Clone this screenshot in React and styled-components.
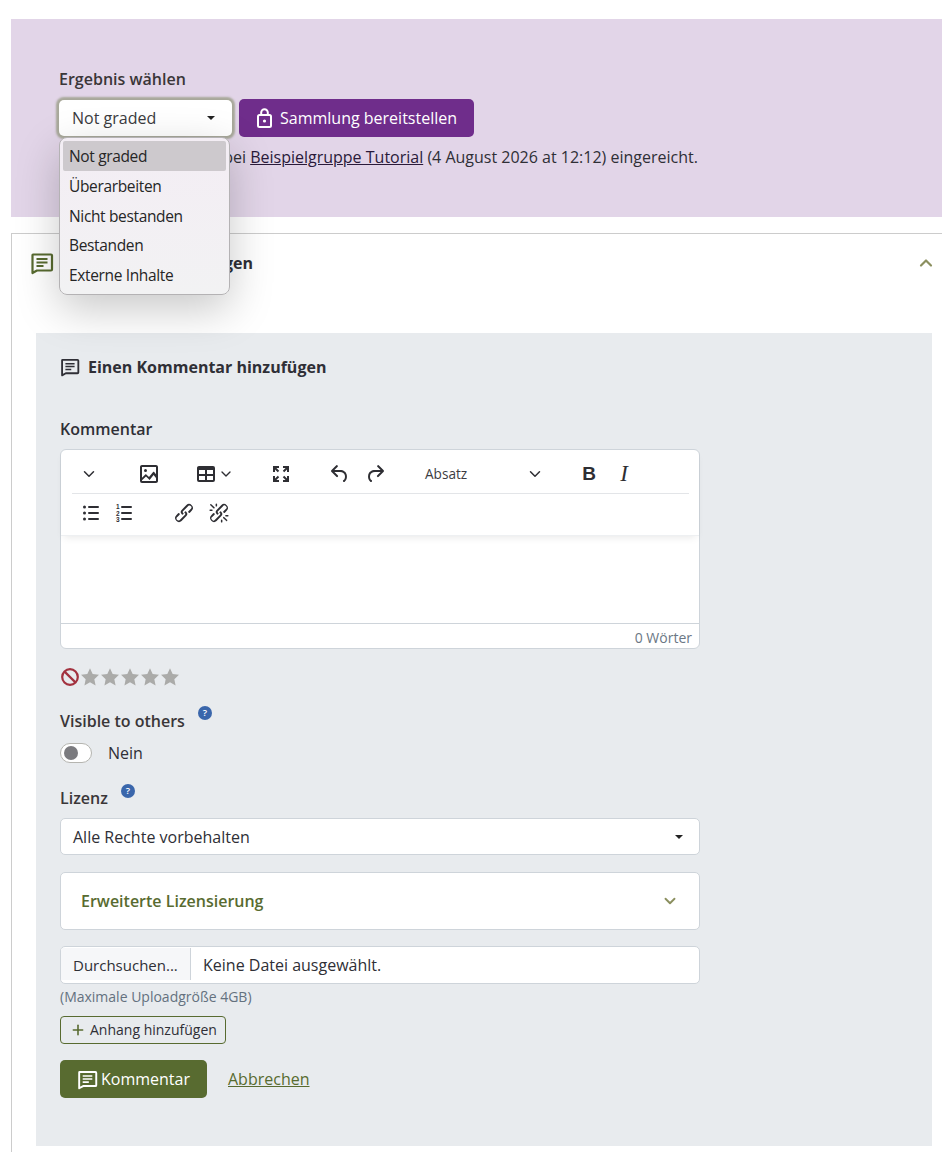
import React from "react";
import styled, { createGlobalStyle } from "styled-components";
import { ChevronDown, ChevronUp, Plus } from "lucide-react";

const GlobalStyle = createGlobalStyle`
  * { box-sizing: border-box; }
  body {
    margin: 0;
    background: #fff;
    color: #2f2f36;
    font-family: "Open Sans", "Liberation Sans", sans-serif;
    font-size: 16px;
    line-height: 24px;
  }
`;

const Page = styled.div`
  padding: 19px 0 0 11px;
  height: 1152px;
  overflow: hidden;
`;

const ResultPanel = styled.section`
  height: 198px;
  padding: 48px 0 0 48px;
  background: #e2d5e8;
`;

const Label = styled.div`
  font-weight: 600;
  color: #3a3638;
`;

const ResultRow = styled.div`
  display: flex;
  gap: 7px;
  margin-top: 8px;
  height: 38px;
`;

const SelectWrap = styled.div`
  position: relative;
  width: 173px;
`;

const FocusSelect = styled.div`
  display: flex;
  align-items: center;
  justify-content: space-between;
  height: 36px;
  margin-top: 1px;
  padding: 0 17px 0 13px;
  background: #fff;
  border-radius: 5px;
  box-shadow: 0 0 2px 3px rgba(88, 107, 48, 0.42);
  color: #3b3b40;
`;

const Caret = styled.span`
  width: 0;
  height: 0;
  border-left: 4px solid transparent;
  border-right: 4px solid transparent;
  border-top: 4px solid #222;
`;

const Menu = styled.ul`
  position: absolute;
  z-index: 5;
  top: 38px;
  left: 0;
  width: 171px;
  height: 158px;
  margin: 0;
  padding: 3px;
  list-style: none;
  background: linear-gradient(#f3edf4, #f2f2f3);
  border: 1px solid #b4b2b4;
  border-radius: 8px;
  box-shadow: 0 14px 44px rgba(0, 0, 0, 0.22);
`;

const MenuItem = styled.li`
  height: 29.8px;
  padding-left: 6px;
  font-size: 15.5px;
  letter-spacing: -0.35px;
  line-height: 30px;
  color: #262626;
  border-radius: 2px;
  background: ${(p) => (p.$active ? "#cdc9cd" : "transparent")};
`;

const PurpleButton = styled.button`
  display: flex;
  align-items: center;
  gap: 8px;
  width: 235px;
  height: 38px;
  padding: 0 0 0 18px;
  font: inherit;
  color: #fff;
  background: #6f2d8b;
  border: 0;
  border-radius: 5px;
`;

const SubmittedText = styled.p`
  margin: 8px 0 0;
`;

const HiddenLead = styled.span`
  display: inline-block;
  width: 187px;
  text-align: right;
  white-space: nowrap;
`;

const DarkLink = styled.a`
  color: #2a1a3a;
  text-decoration: underline;
`;

const Card = styled.section`
  margin-top: 16px;
  height: 920px;
  padding: 17px 10px 0 24px;
  border: 1px solid #ccc;
  border-right: 0;
  border-bottom: 0;
`;

const CardHead = styled.div`
  display: flex;
  align-items: center;
  justify-content: space-between;
  height: 24px;
  margin-left: -6px;
  margin-right: -4px;
`;

const CardTitle = styled.h2`
  display: flex;
  align-items: center;
  gap: 9px;
  margin: 0;
  font-size: 16px;
  font-weight: 700;
`;

const CommentPanel = styled.div`
  height: 813px;
  margin-top: 58px;
  padding: 22px 0 0 24px;
  background: #e8ebee;
`;

const FormTitle = styled.h3`
  display: flex;
  align-items: center;
  gap: 8px;
  height: 24px;
  margin: 0;
  font-size: 16px;
  font-weight: 700;
`;

const FieldLabel = styled.div`
  margin-top: 38px;
  font-weight: 600;
`;

const Editor = styled.div`
  width: 640px;
  height: 200px;
  margin-top: 8px;
  background: #fff;
  border: 1px solid #ced4da;
  border-radius: 6px;
  display: flex;
  flex-direction: column;
`;

const Toolbar = styled.div`
  height: 86px;
  padding: 5px 10px 0 11px;
  box-shadow: 0 4px 8px -3px rgba(0, 0, 0, 0.1);
  border-bottom: 1px solid #eef0f2;
`;

const ToolRow = styled.div`
  display: flex;
  align-items: center;
  height: ${(p) => (p.$line ? 39 : 37)}px;
  border-bottom: ${(p) => (p.$line ? "1px solid #e3e5e8" : "0")};
`;

const ToolBtn = styled.span`
  display: flex;
  align-items: center;
  justify-content: center;
  flex: none;
  width: ${(p) => p.$w || 34}px;
  height: 34px;
  margin-left: ${(p) => p.$gap || 0}px;
  color: #2e2e33;
`;

const FormatSelect = styled(ToolBtn)`
  justify-content: space-between;
  padding: 0 7px 0 8px;
  font-size: 13.6px;
  color: #3c3c42;
`;

const BoldGlyph = styled.b`
  font-family: "Liberation Sans", sans-serif;
  font-size: 19px;
`;

const ItalicGlyph = styled.i`
  font-family: "Liberation Serif", serif;
  font-size: 23px;
`;

const EditArea = styled.div`
  flex: 1;
`;

const StatusBar = styled.div`
  height: 25px;
  padding-right: 7px;
  font-size: 14px;
  line-height: 28px;
  text-align: right;
  color: #6b7785;
  border-top: 1px solid #ced4da;
`;

const Stars = styled.div`
  display: flex;
  align-items: center;
  height: 20px;
  margin-top: 18px;
`;

const Optional = styled.div`
  display: flex;
  align-items: flex-start;
  margin-top: ${(p) => p.$top}px;
  height: 24px;
`;

const Help = styled.span`
  display: flex;
  align-items: center;
  justify-content: center;
  width: 14px;
  height: 14px;
  margin: ${(p) => p.$lift}px 0 0 ${(p) => p.$gap}px;
  border-radius: 50%;
  background: #3a66ab;
  color: #fff;
  font-size: 9.5px;
  font-weight: 600;
  line-height: 14px;
`;

const ToggleRow = styled.div`
  display: flex;
  align-items: center;
  gap: 16px;
  height: 24px;
  margin-top: 8px;
`;

const Toggle = styled.span`
  display: flex;
  align-items: center;
  width: 32px;
  height: 20px;
  padding-left: 3px;
  background: #fff;
  border: 1px solid #b5b5b0;
  border-radius: 10px;
  &::before {
    content: "";
    width: 14px;
    height: 14px;
    border-radius: 50%;
    background: #7b7b7f;
  }
`;

const LicenseSelect = styled.div`
  display: flex;
  align-items: center;
  justify-content: space-between;
  width: 640px;
  height: 37px;
  margin-top: 8px;
  padding: 0 16px 0 12px;
  background: #fff;
  border: 1px solid #ced4da;
  border-radius: 5px;
`;

const Accordion = styled.div`
  display: flex;
  align-items: center;
  justify-content: space-between;
  width: 640px;
  height: 58px;
  margin-top: 17px;
  padding: 0 20px;
  background: #fff;
  border: 1px solid #ced4da;
  border-radius: 5px;
  font-weight: 600;
  color: #586b30;
`;

const FileField = styled.div`
  display: flex;
  align-items: flex-start;
  width: 640px;
  height: 38px;
  margin-top: 16px;
  background: #fff;
  border: 1px solid #ced4da;
  border-radius: 5px;
  overflow: hidden;
`;

const FileButton = styled.span`
  width: 130px;
  height: 32px;
  margin-top: 1px;
  padding-left: 12px;
  font-size: 15px;
  line-height: 34px;
  background: #f6f7f9;
  border-right: 1px solid #ced4da;
`;

const FileName = styled.span`
  padding-left: 12px;
  line-height: 36px;
`;

const Hint = styled.div`
  margin-top: 1px;
  font-size: 14px;
  color: #64717e;
`;

const AddButton = styled.button`
  display: flex;
  align-items: center;
  gap: 4px;
  width: 166px;
  height: 28px;
  margin-top: 7px;
  padding: 0 0 0 9px;
  font: inherit;
  font-size: 14px;
  color: #2f2f36;
  background: transparent;
  border: 1px solid #586b30;
  border-radius: 4px;
`;

const Actions = styled.div`
  display: flex;
  align-items: center;
  gap: 21px;
  margin-top: 16px;
`;

const SubmitButton = styled.button`
  display: flex;
  align-items: center;
  gap: 3px;
  width: 147px;
  height: 38px;
  padding: 0 0 0 17px;
  font: inherit;
  color: #fff;
  background: #586b30;
  border: 0;
  border-radius: 5px;
`;

const CancelLink = styled.a`
  color: #586b30;
  text-decoration: underline;
`;

const iconFill = "#2e2e33";

const CommentIcon = ({ size = 24, color = "currentColor" }) => (
  <svg width={size} height={size} viewBox="0 0 24 24" fill="none">
    <path d="M3 3.5h18a1 1 0 0 1 1 1v14a1 1 0 0 1-1 1H7l-4.5 2.5V4a.5.5 0 0 1 .5-.5z" stroke={color} strokeWidth="2.2" strokeLinejoin="round" />
    <path d="M6.5 8h11M6.5 11.5h11M6.5 15h7" stroke={color} strokeWidth="1.8" />
  </svg>
);

const LockIcon = () => (
  <svg width="15" height="20" viewBox="0 0 15 20" fill="none" stroke="#fff" strokeWidth="2">
    <path d="M4.2 7V4.6a3.3 3.3 0 0 1 6.6 0V7" />
    <rect x="1" y="7" width="13" height="12" rx="1.5" />
    <circle cx="7.5" cy="13" r="1.6" fill="#fff" stroke="none" />
  </svg>
);

const ImageIcon = () => (
  <svg width="24" height="24" viewBox="0 0 24 24" fill={iconFill}>
    <path fillRule="evenodd" d="M5 15.7l3.3-3.2c.3-.3.7-.3 1 0L12 15l4.1-4.9c.3-.4.8-.4 1.1 0L19 12.2V5H5v10.7zM5 18.3V19h14v-3l-2.4-2.9-4 4.9-3.6-3.5L5 18.3zM5 3h14c1.1 0 2 .9 2 2v14c0 1.1-.9 2-2 2H5a2 2 0 0 1-2-2V5c0-1.1.9-2 2-2zm3.5 7a1.5 1.5 0 1 1 0-3 1.5 1.5 0 0 1 0 3z" />
  </svg>
);

const TableIcon = () => (
  <svg width="24" height="24" viewBox="0 0 24 24" fill={iconFill}>
    <path fillRule="evenodd" d="M19 4a2 2 0 0 1 2 2v12a2 2 0 0 1-2 2H5a2 2 0 0 1-2-2V6c0-1.1.9-2 2-2h14zM5 14v4h6v-4H5zm14 0h-6v4h6v-4zm0-6h-6v4h6V8zM5 12h6V8H5v4z" />
  </svg>
);

const FullscreenIcon = () => (
  <svg width="24" height="24" viewBox="0 0 24 24" fill={iconFill}>
    <path d="M4 4h6v2H7.4l2.8 2.8-1.4 1.4L6 7.4V10H4V4zM14 4h6v6h-2V7.4l-2.8 2.8-1.4-1.4L16.6 6H14V4zM8.8 13.8l1.4 1.4L7.4 18H10v2H4v-6h2v2.6l2.8-2.8zM15.2 13.8l2.8 2.8V14h2v6h-6v-2h2.6l-2.8-2.8 1.4-1.4z" />
  </svg>
);

const UndoIcon = ({ flip }) => (
  <svg width="24" height="24" viewBox="0 0 24 24" fill={iconFill} style={flip ? { transform: "scaleX(-1)" } : undefined}>
    <path d="M6.4 8H12c3.7 0 6.2 2 6.8 5.1.6 2.7-.4 5.6-2.3 6.8a1 1 0 0 1-1-1.8c1.1-.6 1.8-2.7 1.4-4.6-.5-2.1-2.1-3.5-4.9-3.5H6.4l3.3 3.3a1 1 0 1 1-1.4 1.4l-5-5a1 1 0 0 1 0-1.4l5-5a1 1 0 0 1 1.4 1.4L6.4 8z" />
  </svg>
);

const BulletIcon = () => (
  <svg width="24" height="24" viewBox="0 0 24 24" fill={iconFill}>
    <circle cx="5.5" cy="6" r="1.5" />
    <circle cx="5.5" cy="12" r="1.5" />
    <circle cx="5.5" cy="18" r="1.5" />
    <rect x="9" y="5" width="11" height="2" rx="1" />
    <rect x="9" y="11" width="11" height="2" rx="1" />
    <rect x="9" y="17" width="11" height="2" rx="1" />
  </svg>
);

const NumberIcon = () => (
  <svg width="24" height="24" viewBox="0 0 24 24" fill={iconFill}>
    <text x="4" y="8" fontSize="6.5" fontFamily="Liberation Sans" fontWeight="700">1</text>
    <text x="4" y="14.5" fontSize="6.5" fontFamily="Liberation Sans" fontWeight="700">2</text>
    <text x="4" y="21" fontSize="6.5" fontFamily="Liberation Sans" fontWeight="700">3</text>
    <rect x="9" y="5" width="11" height="2" rx="1" />
    <rect x="9" y="11" width="11" height="2" rx="1" />
    <rect x="9" y="17" width="11" height="2" rx="1" />
  </svg>
);

const LinkIcon = () => (
  <svg width="24" height="24" viewBox="0 0 24 24" fill={iconFill}>
    <path d="M6.2 12.3a1 1 0 0 1 1.4 1.4l-2 2a2 2 0 1 0 2.6 2.8l4.8-4.8a1 1 0 0 0 0-1.4 1 1 0 1 1 1.4-1.3 2.9 2.9 0 0 1 0 4L9.6 20a3.9 3.9 0 0 1-5.5-5.5l2-2.2zm11.6-.6a1 1 0 0 1-1.4-1.4l2-2a2 2 0 1 0-2.6-2.8L11 10.3a1 1 0 0 0 0 1.4A1 1 0 1 1 9.6 13a2.9 2.9 0 0 1 0-4L14.4 4a3.9 3.9 0 0 1 5.5 5.5l-2 2.2z" />
  </svg>
);

const UnlinkIcon = () => (
  <svg width="24" height="24" viewBox="0 0 24 24" fill={iconFill}>
    <path d="M6.2 12.3a1 1 0 0 1 1.4 1.4l-2.1 2a2 2 0 1 0 2.7 2.8l4.8-4.8a1 1 0 0 0 0-1.4 1 1 0 1 1 1.4-1.3 2.9 2.9 0 0 1 0 4L9.6 20a3.9 3.9 0 0 1-5.5-5.5l2-2.2zm11.6-.6a1 1 0 0 1-1.4-1.4l2.1-2a2 2 0 1 0-2.7-2.8L11 10.3a1 1 0 0 0 0 1.4A1 1 0 1 1 9.6 13a2.9 2.9 0 0 1 0-4L14.4 4a3.9 3.9 0 0 1 5.5 5.5l-2 2.2zM7.6 6.3a.8.8 0 0 1-1 1.1L3.3 4.2a.7.7 0 1 1 1-1l3.2 3.1zM5.1 8.6a.8.8 0 0 1 0 1.5H3a.8.8 0 0 1 0-1.5H5zm5-3.5a.8.8 0 0 1-1.5 0V3a.8.8 0 0 1 1.5 0v2zm6 11.8a.8.8 0 0 1 1-1l3.2 3.2a.8.8 0 0 1-1 1L16 17zm-2.2 2a.8.8 0 0 1 1.5 0V21a.8.8 0 0 1-1.5 0V19zm5-3.5a.7.7 0 1 1 0-1.5H21a.8.8 0 0 1 0 1.5h-2z" />
  </svg>
);

const BanIcon = () => (
  <svg width="20" height="20" viewBox="0 0 20 20" fill="none" stroke="#a3323f" strokeWidth="2.2">
    <circle cx="10" cy="10" r="7.8" />
    <path d="M4.6 4.6l10.8 10.8" />
  </svg>
);

const StarIcon = () => (
  <svg width="20" height="20" viewBox="0 0 24 24" fill="#ababa9">
    <path d="M12 1.5l3.2 7 7.6.9-5.6 5.2 1.5 7.5L12 18.3l-6.7 3.8 1.5-7.5L1.2 9.4l7.6-.9z" />
  </svg>
);

const menuItems = ["Not graded", "Überarbeiten", "Nicht bestanden", "Bestanden", "Externe Inhalte"];

export default function App() {
  return (
    <Page>
      <GlobalStyle />
      <ResultPanel>
        <Label>Ergebnis wählen</Label>
        <ResultRow>
          <SelectWrap>
            <FocusSelect>
              Not graded
              <Caret />
            </FocusSelect>
            <Menu>
              {menuItems.map((item, index) => (
                <MenuItem key={item} $active={index === 0}>
                  {item}
                </MenuItem>
              ))}
            </Menu>
          </SelectWrap>
          <PurpleButton>
            <LockIcon />
            Sammlung bereitstellen
          </PurpleButton>
        </ResultRow>
        <SubmittedText>
          <HiddenLead>Das Portfolio wurde bei</HiddenLead>{" "}
          <DarkLink>Beispielgruppe Tutorial</DarkLink> (4 August 2026 at 12:12) eingereicht.
        </SubmittedText>
      </ResultPanel>

      <Card>
        <CardHead>
          <CardTitle>
            <CommentIcon color="#586b30" />
            Kommentar hinzufügen
          </CardTitle>
          <ChevronUp size={20} color="#8b8f5f" strokeWidth={2.6} />
        </CardHead>

        <CommentPanel>
          <FormTitle>
            <CommentIcon size={20} />
            Einen Kommentar hinzufügen
          </FormTitle>

          <FieldLabel>Kommentar</FieldLabel>
          <Editor>
            <Toolbar>
              <ToolRow $line>
                <ToolBtn><ChevronDown size={18} color={iconFill} /></ToolBtn>
                <ToolBtn $gap={26}><ImageIcon /></ToolBtn>
                <ToolBtn $gap={22} $w={52}><TableIcon /><ChevronDown size={16} color={iconFill} /></ToolBtn>
                <ToolBtn $gap={24}><FullscreenIcon /></ToolBtn>
                <ToolBtn $gap={25}><UndoIcon /></ToolBtn>
                <ToolBtn $gap={1}><UndoIcon flip /></ToolBtn>
                <FormatSelect $gap={25} $w={134}>
                  Absatz
                  <ChevronDown size={18} color={iconFill} />
                </FormatSelect>
                <ToolBtn $gap={21}><BoldGlyph>B</BoldGlyph></ToolBtn>
                <ToolBtn $gap={1}><ItalicGlyph>I</ItalicGlyph></ToolBtn>
              </ToolRow>
              <ToolRow>
                <ToolBtn $gap={2}><BulletIcon /></ToolBtn>
                <ToolBtn $w={33} $gap={-1}><NumberIcon /></ToolBtn>
                <ToolBtn $gap={27}><LinkIcon /></ToolBtn>
                <ToolBtn $gap={1}><UnlinkIcon /></ToolBtn>
              </ToolRow>
            </Toolbar>
            <EditArea />
            <StatusBar>0 Wörter</StatusBar>
          </Editor>

          <Stars>
            <BanIcon />
            <StarIcon />
            <StarIcon />
            <StarIcon />
            <StarIcon />
            <StarIcon />
          </Stars>

          <Optional $top={22}>
            <Label>Visible to others</Label>
            <Help $gap={13} $lift={-3}>?</Help>
          </Optional>
          <ToggleRow>
            <Toggle />
            Nein
          </ToggleRow>

          <Optional $top={21}>
            <Label>Lizenz</Label>
            <Help $gap={13} $lift={-2}>?</Help>
          </Optional>
          <LicenseSelect>
            Alle Rechte vorbehalten
            <Caret />
          </LicenseSelect>

          <Accordion>
            Erweiterte Lizensierung
            <ChevronDown size={18} color="#8b8f5f" strokeWidth={2.5} />
          </Accordion>

          <FileField>
            <FileButton>Durchsuchen...</FileButton>
            <FileName>Keine Datei ausgewählt.</FileName>
          </FileField>
          <Hint>(Maximale Uploadgröße 4GB)</Hint>

          <AddButton>
            <Plus size={16} color="#586b30" strokeWidth={2.4} />
            Anhang hinzufügen
          </AddButton>

          <Actions>
            <SubmitButton>
              <CommentIcon size={21} />
              Kommentar
            </SubmitButton>
            <CancelLink>Abbrechen</CancelLink>
          </Actions>
        </CommentPanel>
      </Card>
    </Page>
  );
}
